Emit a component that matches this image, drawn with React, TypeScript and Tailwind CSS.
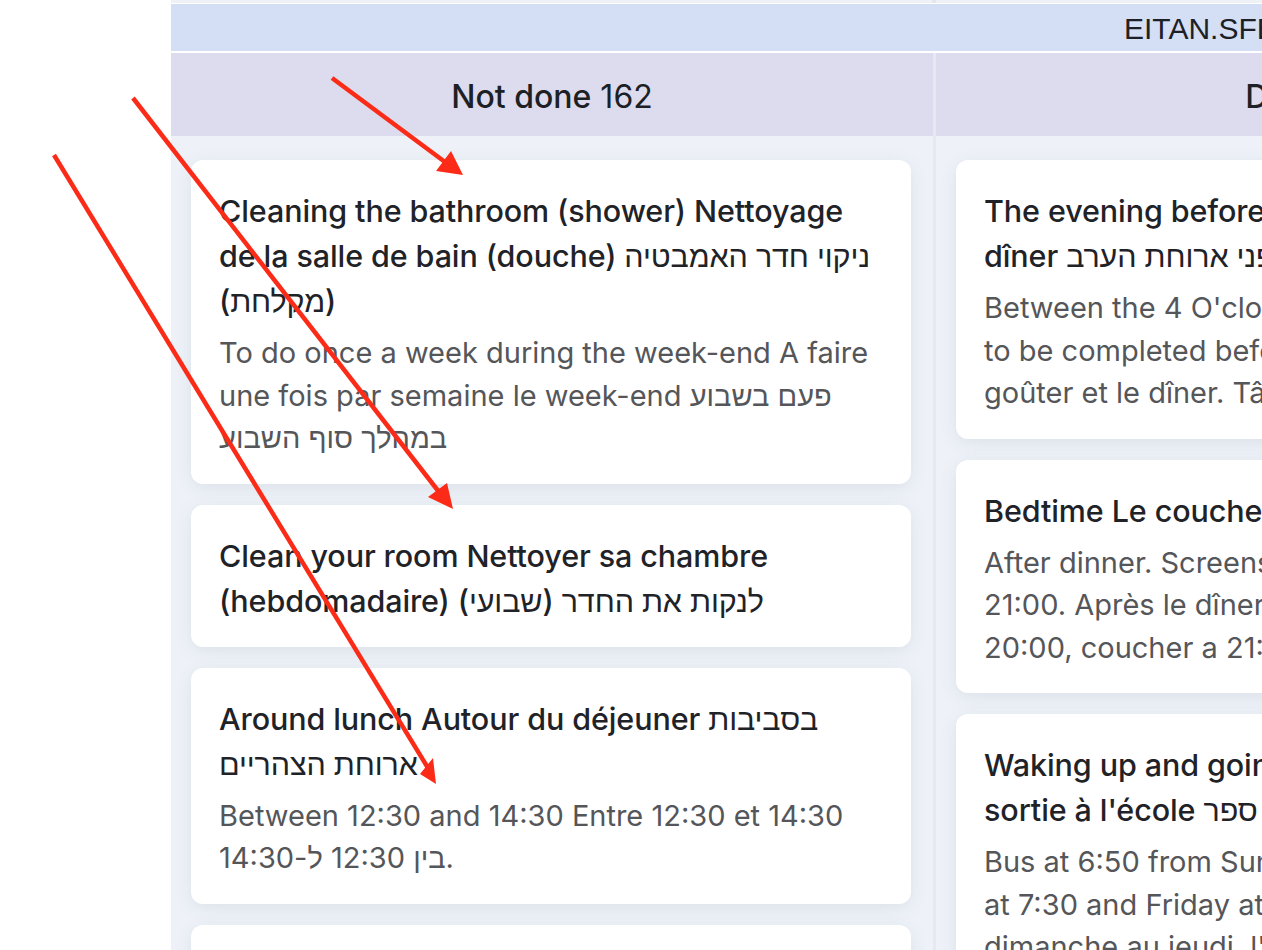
import React from "react";

type Task = { title: string; desc?: string };

const notDone: Task[] = [
  {
    title:
      "Cleaning the bathroom (shower) Nettoyage de la salle de bain (douche) ניקוי חדר האמבטיה (מקלחת)",
    desc:
      "To do once a week during the week-end A faire une fois par semaine le week-end פעם בשבוע במהלך סוף השבוע",
  },
  {
    title: "Clean your room Nettoyer sa chambre (hebdomadaire) לנקות את החדר (שבועי)",
  },
  {
    title: "Around lunch Autour du déjeuner בסביבות ארוחת הצהריים",
    desc: "Between 12:30 and 14:30 Entre 12:30 et 14:30 בין 12:30 ל-14:30.",
  },
  {
    title: "Homework Les devoirs שיעורי בית",
    desc: "Before dinner. Avant le dîner.",
  },
];

const done: Task[] = [
  {
    title: "The evening before dinner Le soir avant le dîner לפני ארוחת הערב",
    desc:
      "Between the 4 O'clock snack and dinner. Tasks to be completed before the dinner. Entre le goûter et le dîner. Tâches à faire avant le dîner.",
  },
  {
    title: "Bedtime Le coucher השכבה",
    desc:
      "After dinner. Screens until 20:00, bedtime at 21:00. Après le dîner. Écrans éteints jusqu'à 20:00, coucher a 21:00.",
  },
  {
    title:
      "Waking up and going to school Le réveil et la sortie à l'école השכמה ויציאה לבית ספר",
    desc:
      "Bus at 6:50 from Sunday to Thursday, school is at 7:30 and Friday at 7:45. Bus à 6:50 du dimanche au jeudi, l'école à 7:30 et le vendredi à 7:45.",
  },
];

function Card({ task }: { task: Task }) {
  return (
    <div className="w-[720px] shrink-0 rounded-[12px] bg-white pl-[28px] pr-[28px] pt-[28px] pb-[24px] shadow-[0_4px_18px_rgba(40,55,90,0.09)]">
      <div className="text-[30.5px] leading-[45px] font-medium tracking-[-0.1px] text-[#1f2328]">
        {task.title}
      </div>
      {task.desc && (
        <div className="mt-[9px] text-[29px] leading-[42.5px] text-[#555659]">{task.desc}</div>
      )}
    </div>
  );
}

function Column({ name, count, tasks }: { name: string; count: number; tasks: Task[] }) {
  return (
    <div className="flex w-[762px] shrink-0 flex-col">
      <div className="flex h-[83px] items-center justify-center bg-[#dcdcee] pt-[4px] text-[32px] text-[#1d2126]">
        <span className="font-medium">{name}</span>
        <span className="ml-[9px]">{count}</span>
      </div>
      <div className="flex flex-1 flex-col gap-[21px] bg-[#eef2f8] pl-[20px] pr-[22px] pt-[24px]">
        {tasks.map((t, i) => (
          <Card key={i} task={t} />
        ))}
      </div>
    </div>
  );
}

function Arrows() {
  return (
    <svg
      className="pointer-events-none absolute left-0 top-0"
      width="1262"
      height="950"
      viewBox="0 0 1262 950"
    >
      <g stroke="#fb2b18" strokeWidth="4.5" strokeLinecap="butt" fill="none">
        <line x1="332" y1="78" x2="445" y2="162" />
        <line x1="133" y1="98" x2="439" y2="492" />
        <line x1="54" y1="155" x2="428" y2="768" />
      </g>
      <g fill="#fb2b18">
        <polygon points="463,175 436,171 451,151" />
        <polygon points="453,509 428,497 447,483" />
        <polygon points="436,784 420,774 433,758" />
      </g>
    </svg>
  );
}

export default function App() {
  return (
    <div className="relative h-[950px] w-[1262px] overflow-hidden bg-white font-['Inter','Noto_Sans',sans-serif]">
      <div className="flex h-full">
        <div className="w-[171px] shrink-0 bg-white" />
        <div className="flex min-w-0 flex-1 flex-col overflow-hidden">
          <div className="flex h-[3px] shrink-0">
            <div className="w-[761px] shrink-0 bg-[#eef2f7]" />
            <div className="w-[4px] shrink-0 bg-[#e2e6ed]" />
            <div className="w-[800px] shrink-0 bg-[#eef2f7]" />
          </div>
          <div className="h-px shrink-0 bg-white" />
          <div className="flex h-[47px] shrink-0 items-center bg-[#d4def5] pl-[953px] pt-[2px] font-['Liberation_Sans',sans-serif] text-[30px] whitespace-nowrap text-[#1d2126]">
            EITAN.SFEZ
          </div>
          <div className="h-[2px] shrink-0 bg-white" />
          <div className="flex flex-1">
            <Column name="Not done" count={162} tasks={notDone} />
            <div className="w-[3px] shrink-0 bg-[#e6e9f1]" />
            <Column name="Done" count={104} tasks={done} />
          </div>
        </div>
      </div>
      <Arrows />
    </div>
  );
}
